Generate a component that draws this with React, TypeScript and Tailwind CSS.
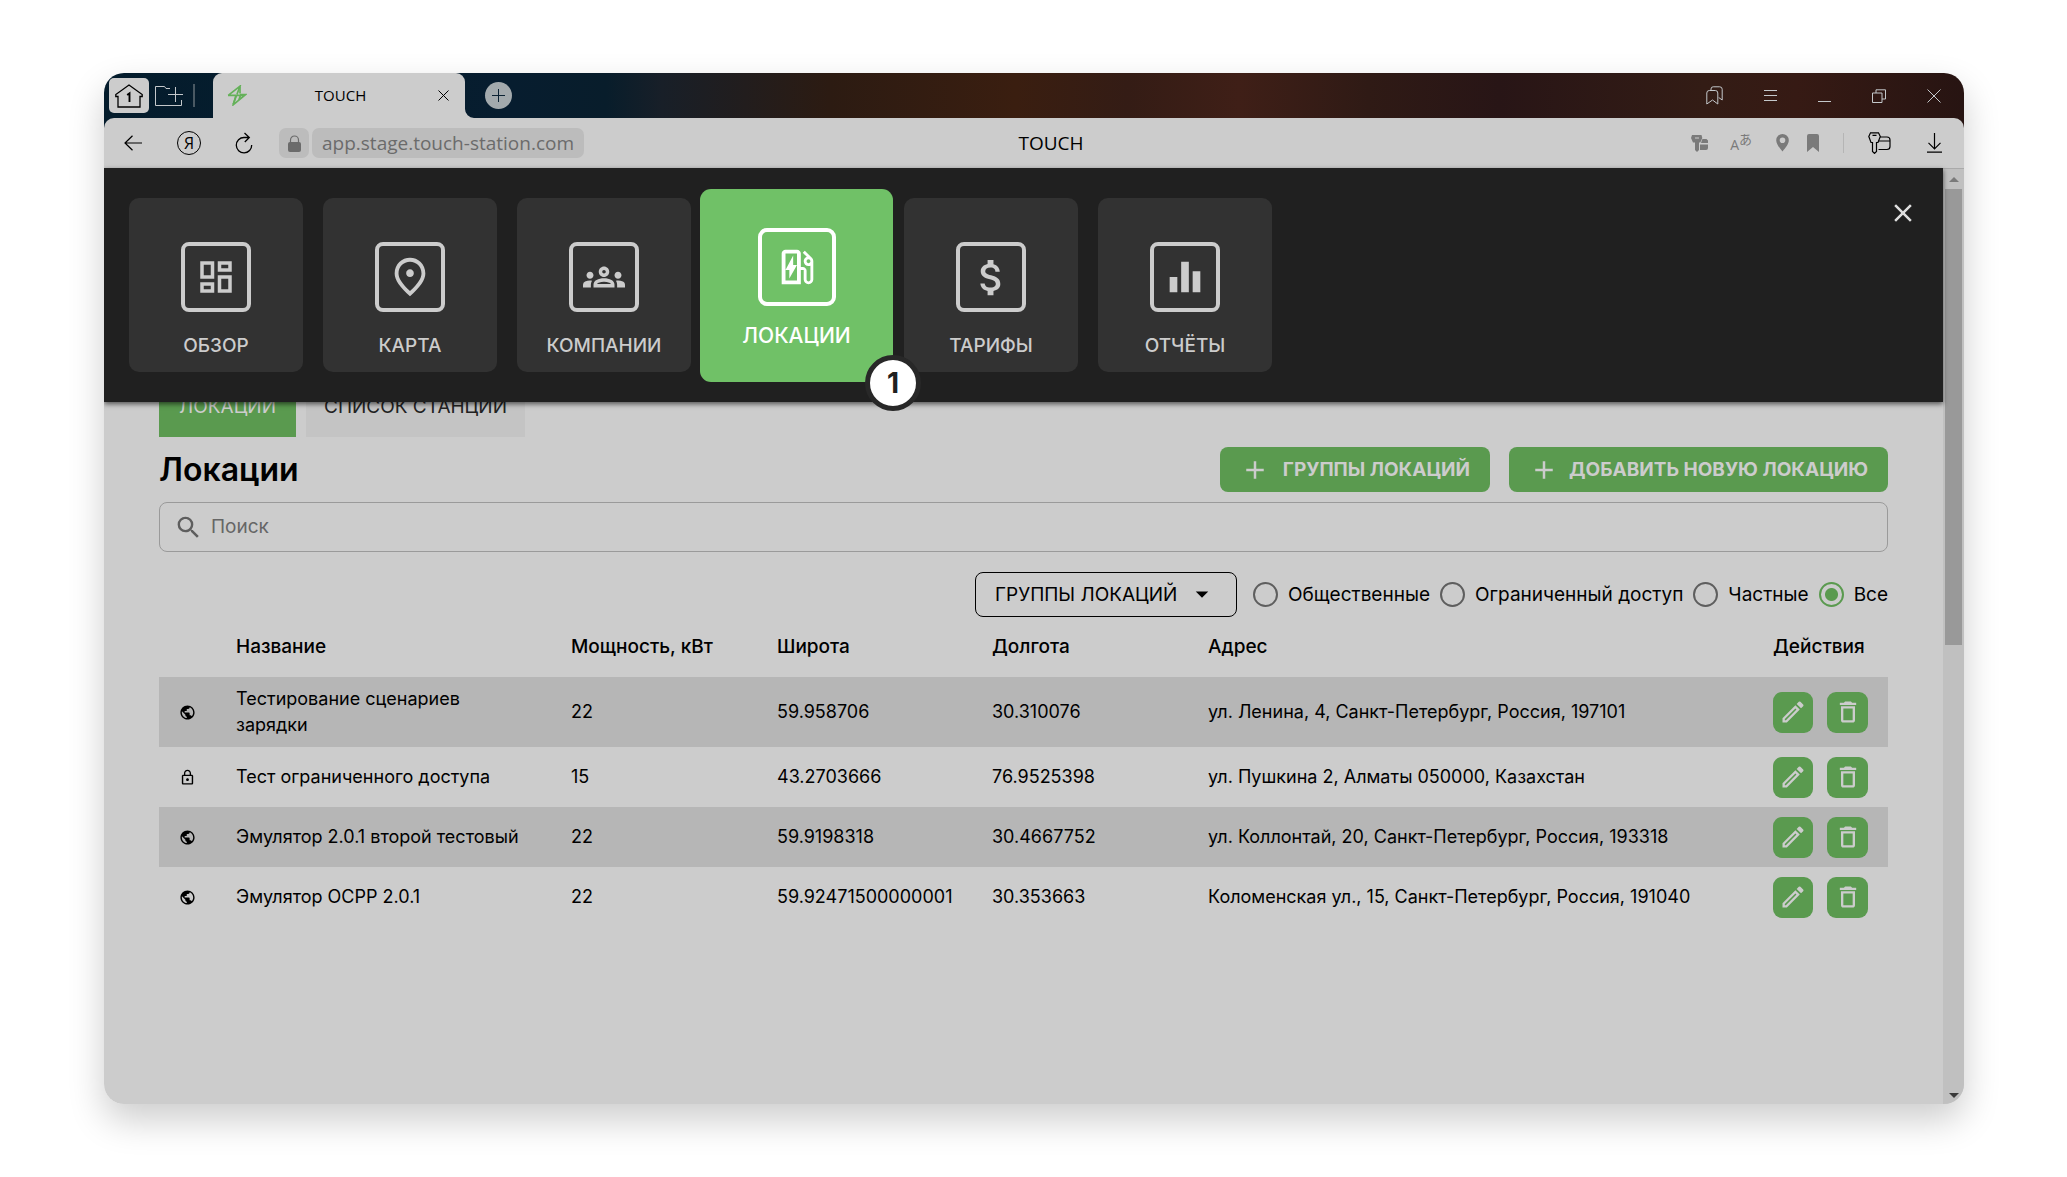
import { useState } from "react";
import type { ReactNode } from "react";
import {
    MdAdd,
    MdArrowDropDown,
    MdAttachMoney,
    MdClose,
    MdDeleteOutline,
    MdEqualizer,
    MdLockOutline,
    MdOutlineDashboard,
    MdOutlineEvStation,
    MdOutlineGroups,
    MdOutlineModeEdit,
    MdOutlinePlace,
    MdPublic,
    MdSearch,
} from "react-icons/md";

const menuItems = [
    { title: "ОБЗОР", icon: <MdOutlineDashboard size={42} /> },
    { title: "КАРТА", icon: <MdOutlinePlace size={46} /> },
    { title: "КОМПАНИИ", icon: <MdOutlineGroups size={42} /> },
    { title: "ЛОКАЦИИ", icon: <MdOutlineEvStation size={46} />, step: 1 },
    { title: "ТАРИФЫ", icon: <MdAttachMoney size={47} /> },
    { title: "ОТЧЁТЫ", icon: <MdEqualizer size={46} /> },
];

const access = ["Общественные", "Ограниченный доступ", "Частные", "Все"];

const locations = [
    { name: "Тестирование сценариев зарядки", power: "22", lat: "59.958706", lon: "30.310076", address: "ул. Ленина, 4, Санкт-Петербург, Россия, 197101", locked: false },
    { name: "Тест ограниченного доступа", power: "15", lat: "43.2703666", lon: "76.9525398", address: "ул. Пушкина 2, Алматы 050000, Казахстан", locked: true },
    { name: "Эмулятор 2.0.1 второй тестовый", power: "22", lat: "59.9198318", lon: "30.4667752", address: "ул. Коллонтай, 20, Санкт-Петербург, Россия, 193318", locked: false },
    { name: "Эмулятор OCPP 2.0.1", power: "22", lat: "59.92471500000001", lon: "30.353663", address: "Коломенская ул., 15, Санкт-Петербург, Россия, 191040", locked: false },
];

function Line({ w, h, box, children, sw = 1 }: { w: number; h: number; box?: string; children: ReactNode; sw?: number }) {
    return (
        <svg width={w} height={h} viewBox={box ?? `0 0 ${w} ${h}`} fill="none" stroke="currentColor" strokeWidth={sw} className="shrink-0" aria-hidden="true">
            {children}
        </svg>
    );
}

function TitleBar() {
    return (
        <div className="flex h-[45px] items-center pl-[5px] text-[#c4c8cb]">
            <button aria-label="Домой" className="flex h-[35px] w-10 items-center justify-center rounded-[5px] bg-[#cccccc] text-black">
                <Line w={28} h={24} sw={1.3}>
                    <path d="M3 12.5H.8v-2L14 1l13.200 9.500v2H25V23H3z" />
                    <path d="M12.200 11l2.300-1.700V18" strokeWidth="1.900" />
                </Line>
            </button>
            <button aria-label="Новая группа" className="ml-[6px]">
                <Line w={28} h={22}>
                    <path d="M15 3.500H11L9.500 1.500H.5v19h26V15M13 9.500h15M20.500 2v15" />
                </Line>
            </button>
            <div className="ml-[10px] h-[23px] w-[2px] bg-[#4a5963]" />
            <div className="relative ml-[18px] flex h-full w-[252px] items-center rounded-t-[9px] bg-[#cccccc] pr-4 pl-[14px] text-black">
                <svg width="20" height="21" viewBox="0 0 20 21" fill="none" stroke="#65b15a" strokeWidth="1.700" aria-hidden="true">
                    <path d="M1.200 10.300L13 1.200l-3 8M1 10.300h15.500M9 10.300L6.300 19.700 18.800 9.500h-5l-2 5.500" />
                    <path d="M13 1.500v7M6 19.500l3.500-9" />
                </svg>
                <span className="flex-1 pr-1 text-center font-['Open_Sans',sans-serif] text-[15px]">TOUCH</span>
                <button aria-label="Закрыть вкладку">
                    <Line w={11} h={11}><path d="M.5.5l10 10M10.500.5l-10 10" /></Line>
                </button>
                <svg width="9" height="9" viewBox="0 0 9 9" className="absolute bottom-0 left-full" fill="#cccccc" aria-hidden="true"><path d="M0 0v9h9A9 9 0 0 1 0 0z" /></svg>
            </div>
            <button aria-label="Новая вкладка" className="ml-5 flex size-[27px] items-center justify-center rounded-full bg-[#a3aaad] text-[#0b2233]">
                <Line w={13} h={13}><path d="M0 6.500h13M6.500 0v13" /></Line>
            </button>
            <div className="ml-auto flex items-center gap-[41px] pr-[23px]">
                <button aria-label="Коллекции">
                    <Line w={17} h={19}>
                        <path d="M.8 18V7q0-2.500 2.500-2.500h6q2.500 0 2.500 2.500v11L6.500 14z" />
                        <path d="M5 4.500V3Q5 .8 7.200.8h6.500q2.500 0 2.500 2.500V14l-3.500-2.500" />
                    </Line>
                </button>
                <button aria-label="Меню"><Line w={13} h={13}><path d="M0 1.500h13M0 6.500h13M0 11.500h13" /></Line></button>
                <button aria-label="Свернуть"><Line w={13} h={13}><path d="M0 12.500h13" /></Line></button>
                <button aria-label="Восстановить"><Line w={14} h={14}><path d="M.5 4h9.500v9.500H.5zM4 4V.8h9.500V10H10" /></Line></button>
                <button aria-label="Закрыть"><Line w={14} h={14}><path d="M.5.5l13 13M13.500.5l-13 13" /></Line></button>
            </div>
        </div>
    );
}

function AddressBar() {
    return (
        <div className="flex h-[50px] items-center rounded-t-[10px] bg-[#cccccc] pr-[22px] pl-5 font-['Open_Sans',sans-serif] text-[19px] text-black">
            <div className="flex flex-1 items-center">
                <button aria-label="Назад"><Line w={18} h={16} sw={1.2}><path d="M18 8H1M8.500.8L1 8l7.500 7.200" /></Line></button>
                <button aria-label="Яндекс" className="ml-[35px] flex size-6 items-center justify-center rounded-full border border-black text-base leading-none">
                    Я
                </button>
                <button aria-label="Обновить" className="ml-[34px]">
                    <Line w={18} h={22} sw={1.3}>
                        <path d="M14 5.500H9A7.700 7.700 0 1 0 16.700 13M9.500 1l4.800 4.500L9.800 10" />
                    </Line>
                </button>
                <div className="ml-[26px] flex h-[30px] w-[30px] items-center justify-center rounded-[7px] bg-[#bcbcbc] text-[#6b6b6b]">
                    <svg width="13" height="17" viewBox="0 0 13 17" fill="currentColor" aria-hidden="true">
                        <rect y="7" width="13" height="10" rx="2" />
                        <path d="M2.500 7.500V5a4 4 0 0 1 8 0v2.500" fill="none" stroke="currentColor" strokeWidth="1.200" />
                    </svg>
                </div>
                <div className="ml-[3px] flex h-[30px] items-center rounded-[7px] bg-[#bcbcbc] px-[10px] text-[#6b6b6b]">
                    app.stage.touch-station.com
                </div>
            </div>
            <span className="ml-9">TOUCH</span>
            <div className="flex flex-1 items-center justify-end text-[#7a7a7a]">
                <svg width="17" height="17" viewBox="0 0 17 17" fill="currentColor" aria-hidden="true">
                    <path d="M1 0h9.500l.8 3-2 4.500H8v7.500l-2 2-2-2V7.500H2L0 3z" />
                    <path d="M12 4q-1 0-1 1l-1 3h7V5.500L15.500 4zM9 9.500h8V13q0 2-2 2H9z" />
                    <path d="M4 3h4" stroke="#cccccc" strokeWidth="1" />
                </svg>
                <span className="ml-[22px] flex items-start font-['Open_Sans','Noto_Sans_CJK_JP',sans-serif]">
                    <span className="pt-1 text-sm leading-4">A</span>
                    <span className="text-[13px] leading-3">あ</span>
                </span>
                <svg width="13" height="18" viewBox="0 0 13 18" fill="currentColor" className="ml-6" aria-hidden="true">
                    <path fillRule="evenodd" d="M6.500 0A6.300 6.300 0 0 1 12.800 6.300C12.800 10 9.500 14 6.500 17.500 3.500 14 .2 10 .2 6.300A6.300 6.300 0 0 1 6.500 0zm0 3.500a2.800 2.800 0 1 0 0 5.600 2.800 2.800 0 0 0 0-5.600z" />
                </svg>
                <svg width="12" height="18" viewBox="0 0 12 18" fill="currentColor" className="ml-[18px]" aria-hidden="true">
                    <path d="M0 2Q0 0 2 0h8q2 0 2 2v16l-6-5-6 5z" />
                </svg>
                <div className="ml-6 h-5 w-px bg-[#b5b5b5]" />
                <button aria-label="Пароли и карты" className="ml-6 text-black">
                    <Line w={23} h={22} sw={1.2}>
                        <path d="M2.500.8h8l1.800 3.700L10 10.500H8.500v9L6.500 21.400 4.500 19.500v-9H3L.8 4.500zM4.500 3.300h4" />
                        <path d="M12 5h7q3 0 3 3v6.500q0 3-3 3h-8.500M10.500 9H22" />
                    </Line>
                </button>
                <button aria-label="Загрузки" className="ml-9 text-black">
                    <Line w={15} h={20} sw={1.2}><path d="M7.500 0v15.500M1.500 9.800l6 6 6-6M0 19.200h15" /></Line>
                </button>
            </div>
        </div>
    );
}

function MainMenu() {
    return (
        <nav className="relative z-10 flex h-[234px] items-center gap-5 bg-[#202020] px-[25px] shadow-[0_2px_5px_rgba(0,0,0,0.6)]">
            {menuItems.map((item) =>
                item.step ? (
                    <a key={item.title} href="#" aria-current="page" className="relative -mr-[9px] -ml-[11px] flex h-[193px] w-[193px] flex-col items-center justify-end gap-4 rounded-[11px] bg-[#70c167] pb-8 text-[21px] leading-7 font-medium text-white">
                        <span className="flex size-[78px] items-center justify-center rounded-[9px] border-4 border-white">{item.icon}</span>
                        {item.title}
                        <span className="absolute -right-7 -bottom-[29px] z-10 flex size-14 items-center justify-center rounded-full border-[5px] border-[#282828] bg-white text-[28px] font-bold text-[#202020]">
                            {item.step}
                        </span>
                    </a>
                ) : (
                    <a key={item.title} href="#" className="flex h-[174px] w-[174px] flex-col items-center justify-end gap-5 rounded-[10px] bg-[#323232] pb-3 text-[19px] leading-7 font-medium text-[#cccccc]">
                        <span className="flex size-[70px] items-center justify-center rounded-lg border-4 border-[#cccccc]">{item.icon}</span>
                        {item.title}
                    </a>
                )
            )}
            <button aria-label="Закрыть меню" className="mt-[30px] ml-auto self-start text-[#dddddd]">
                <MdClose size={30} />
            </button>
        </nav>
    );
}

function LocationsTable() {
    return (
        <table className="w-full table-fixed text-left text-lg leading-[26px]">
            <colgroup>
                <col className="w-[77px]" />
                <col className="w-[335px]" />
                <col className="w-[206px]" />
                <col className="w-[215px]" />
                <col className="w-[216px]" />
                <col />
                <col className="w-[115px]" />
            </colgroup>
            <thead className="text-[19px]">
                <tr className="h-[60px]">
                    <th aria-label="Доступ" />
                    <th className="font-medium">Название</th>
                    <th className="font-medium">Мощность, кВт</th>
                    <th className="font-medium">Широта</th>
                    <th className="font-medium">Долгота</th>
                    <th className="font-medium">Адрес</th>
                    <th className="font-medium">Действия</th>
                </tr>
            </thead>
            <tbody>
                {locations.map((row) => (
                    <tr key={row.name} className="h-[60px] first:h-[70px] odd:bg-[#b6b6b6]">
                        <td className="pl-5">{row.locked ? <MdLockOutline size={17} /> : <MdPublic size={17} />}</td>
                        <td className="pr-10">{row.name}</td>
                        <td>{row.power}</td>
                        <td>{row.lat}</td>
                        <td>{row.lon}</td>
                        <td>{row.address}</td>
                        <td>
                            <div className="flex gap-[14px] text-[#cccccc]">
                                <button aria-label="Редактировать" className="flex h-[41px] w-10 items-center justify-center rounded-[9px] bg-[#5a9a4f]">
                                    <MdOutlineModeEdit size={28} />
                                </button>
                                <button aria-label="Удалить" className="flex size-[41px] items-center justify-center rounded-[9px] bg-[#5a9a4f]">
                                    <MdDeleteOutline size={28} />
                                </button>
                            </div>
                        </td>
                    </tr>
                ))}
            </tbody>
        </table>
    );
}

function Locations() {
    const [filter, setFilter] = useState("Все");

    return (
        <main className="px-[55px] text-[19px] leading-[26px] text-black">
            <div className="-mt-[25px] flex gap-[10px]">
                <button className="h-[60px] w-[137px] bg-[#5a9a4f] text-[#cccccc]">ЛОКАЦИИ</button>
                <button className="h-[60px] w-[219px] bg-[#c4c4c4] whitespace-nowrap text-[#222222]">СПИСОК СТАНЦИЙ</button>
            </div>

            <div className="mt-[10px] flex h-[45px] items-center gap-[19px] font-bold text-[#cccccc]">
                <h1 className="mr-auto text-[32px] font-semibold text-black">Локации</h1>
                <button className="flex h-full w-[270px] items-center justify-between rounded-lg bg-[#5a9a4f] px-5 whitespace-nowrap">
                    <MdAdd size={30} /> ГРУППЫ ЛОКАЦИЙ
                </button>
                <button className="flex h-full w-[379px] items-center justify-between rounded-lg bg-[#5a9a4f] px-5 whitespace-nowrap">
                    <MdAdd size={30} /> ДОБАВИТЬ НОВУЮ ЛОКАЦИЮ
                </button>
            </div>

            <label className="mt-[10px] flex h-[50px] items-center gap-2 rounded-lg border border-[#9a9a9a] px-[14px] text-[#5e5e5e]">
                <MdSearch size={29} />
                <input type="search" aria-label="Поиск" placeholder="Поиск" className="flex-1 bg-transparent outline-none placeholder:text-[#666666]" />
            </label>

            <div className="mt-5 flex h-[45px] items-center justify-end gap-[10px]">
                <div className="relative mr-[6px] h-full">
                    <select aria-label="Группы локаций" className="h-full w-[262px] appearance-none rounded-lg border border-black pr-12 pl-[19px]">
                        <option>ГРУППЫ ЛОКАЦИЙ</option>
                    </select>
                    <MdArrowDropDown size={30} className="pointer-events-none absolute top-[7px] right-5" />
                </div>
                {access.map((label) => (
                    <label key={label} className="flex items-center gap-[10px] whitespace-nowrap">
                        <input
                            type="radio"
                            name="access"
                            checked={filter === label}
                            onChange={() => setFilter(label)}
                            className="size-[25px] appearance-none rounded-full border-2 border-[#5e5e5e] checked:border-[#5a9a4f] checked:bg-[radial-gradient(circle,#5a9a4f_6px,transparent_7px)]"
                        />
                        {label}
                    </label>
                ))}
            </div>

            <LocationsTable />
        </main>
    );
}

export default function App() {
    return (
        <div className="flex min-h-screen bg-white py-[73px] pr-[103px] pl-[104px] font-['Inter',sans-serif]">
            <div className="flex flex-1 flex-col overflow-hidden rounded-[20px] bg-[linear-gradient(90deg,#041c2c_0%,#071d2f_22%,#081d2b_27%,#181f28_30%,#2c1b12_39%,#3a1e10_49%,#341c15_55%,#3f1f17_61%,#2f1a15_68%,#281516_75%,#331c15_86%,#361a14_91%,#271412_100%)] bg-[length:100%_70px] bg-no-repeat shadow-[0_16px_36px_rgba(0,0,0,0.2)]">
                <TitleBar />
                <AddressBar />
                <div className="flex flex-1 bg-[#cccccc]">
                    <div className="min-w-0 flex-1">
                        <MainMenu />
                        <Locations />
                    </div>
                    <div className="flex w-[21px] flex-col items-center justify-between border-t border-[#aaaaaa] bg-[#c0c0c0] pt-2 pb-[6px]" aria-hidden="true">
                        <div className="flex flex-col items-center gap-[7px]">
                            <svg width="10" height="5" viewBox="0 0 10 5" fill="#7a7a7a"><path d="M0 5l5-5 5 5z" /></svg>
                            <div className="h-[456px] w-[17px] bg-[#999999]" />
                        </div>
                        <svg width="10" height="5" viewBox="0 0 10 5" fill="#3a3a3a"><path d="M0 0h10L5 5z" /></svg>
                    </div>
                </div>
            </div>
        </div>
    );
}
